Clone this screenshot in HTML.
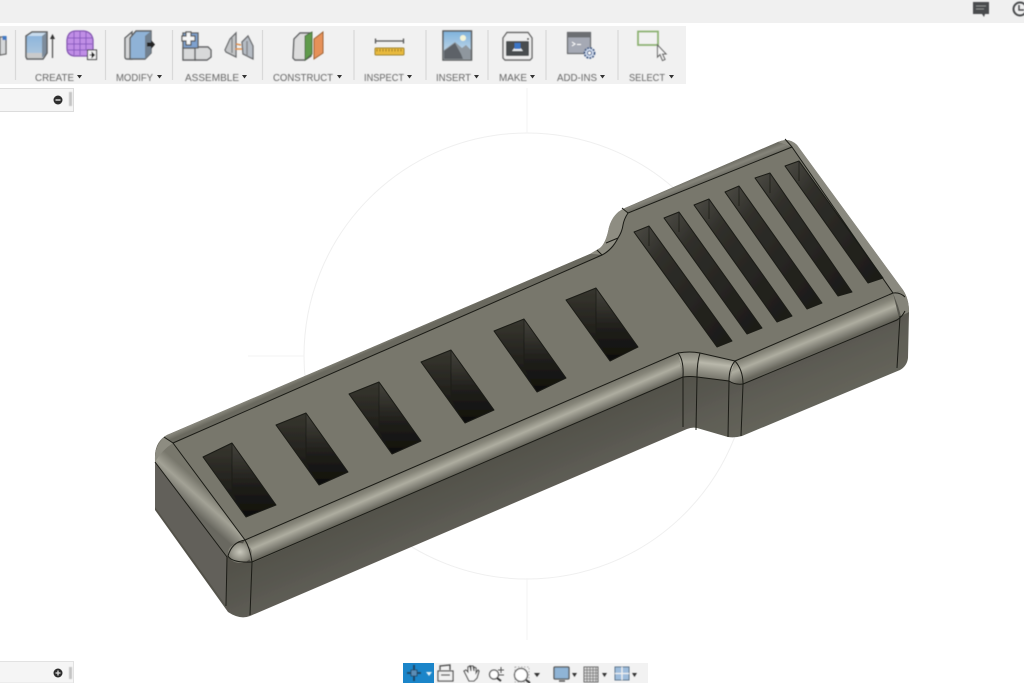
<!DOCTYPE html>
<html><head><meta charset="utf-8"><style>
html,body{margin:0;padding:0;background:#fff;width:1024px;height:683px;overflow:hidden}
svg{display:block}
text{font-family:"Liberation Sans",sans-serif;font-size:10.500px;fill:#666}
</style></head><body>
<svg width="1024" height="683" viewBox="0 0 1024 683" xmlns="http://www.w3.org/2000/svg">
<defs>
<linearGradient id="front" gradientUnits="userSpaceOnUse" x1="400" y1="473" x2="409" y2="494"><stop offset="0" stop-color="#78776c"/><stop offset=".2" stop-color="#87867a"/><stop offset=".5" stop-color="#aeada0"/><stop offset=".8" stop-color="#838278"/><stop offset="1" stop-color="#66655b"/></linearGradient>
<linearGradient id="frontR" gradientUnits="userSpaceOnUse" x1="810" y1="328" x2="819" y2="350"><stop offset="0" stop-color="#78776c"/><stop offset=".2" stop-color="#87867a"/><stop offset=".5" stop-color="#aeada0"/><stop offset=".8" stop-color="#838278"/><stop offset="1" stop-color="#66655b"/></linearGradient>
<linearGradient id="notch" gradientUnits="userSpaceOnUse" x1="712" y1="355" x2="709" y2="380"><stop offset="0" stop-color="#7d7c71"/><stop offset=".35" stop-color="#b9b8ab"/><stop offset=".7" stop-color="#8f8e83"/><stop offset="1" stop-color="#6f6e64"/></linearGradient>
<linearGradient id="notch2" gradientUnits="userSpaceOnUse" x1="688" y1="352" x2="688" y2="377"><stop offset="0" stop-color="#85847a"/><stop offset=".4" stop-color="#a9a89b"/><stop offset="1" stop-color="#6f6e64"/></linearGradient>
<linearGradient id="leftb" gradientUnits="userSpaceOnUse" x1="208" y1="490" x2="191" y2="509"><stop offset="0" stop-color="#78776c"/><stop offset=".45" stop-color="#a3a296"/><stop offset="1" stop-color="#696860"/></linearGradient>
<linearGradient id="back" gradientUnits="userSpaceOnUse" x1="400" y1="338" x2="396" y2="329"><stop offset="0" stop-color="#6a695f"/><stop offset=".5" stop-color="#87867b"/><stop offset="1" stop-color="#737268"/></linearGradient>
<linearGradient id="back2" gradientUnits="userSpaceOnUse" x1="710" y1="182" x2="706" y2="172"><stop offset="0" stop-color="#63625a"/><stop offset=".6" stop-color="#85847a"/><stop offset="1" stop-color="#6e6d64"/></linearGradient>
<linearGradient id="side" gradientUnits="userSpaceOnUse" x1="440" y1="480" x2="470" y2="550"><stop offset="0" stop-color="#52514a"/><stop offset="1" stop-color="#64635a"/></linearGradient>
<linearGradient id="sl" x1="0" y1="0" x2="0" y2="1"><stop offset="0" stop-color="#37362f"/><stop offset=".5" stop-color="#25241f"/><stop offset="1" stop-color="#10100d"/></linearGradient>
<linearGradient id="sr" x1="0" y1="0" x2="0" y2="1"><stop offset="0" stop-color="#44433c"/><stop offset=".55" stop-color="#201f1b"/><stop offset="1" stop-color="#0e0e0b"/></linearGradient>
<linearGradient id="st" x1="0" y1="0" x2="1" y2="1"><stop offset="0" stop-color="#4c4b44"/><stop offset=".25" stop-color="#302f2a"/><stop offset="1" stop-color="#1b1a17"/></linearGradient>
<radialGradient id="ball" cx=".5" cy=".45" r=".6"><stop offset="0" stop-color="#c8c7bb"/><stop offset=".6" stop-color="#96958a"/><stop offset="1" stop-color="#6d6c62"/></radialGradient>
<linearGradient id="blueF" x1="0" y1="0" x2="0" y2="1"><stop offset="0" stop-color="#8db5dc"/><stop offset="1" stop-color="#a9c4dd"/></linearGradient>
<linearGradient id="sky" x1="0" y1="0" x2="0" y2="1"><stop offset="0" stop-color="#7eb2dc"/><stop offset="1" stop-color="#d8e4ec"/></linearGradient>
<filter id="s" x="-20%" y="-20%" width="140%" height="140%"><feGaussianBlur stdDeviation=".4"/></filter>
<filter id="s1" x="-20%" y="-20%" width="140%" height="140%"><feGaussianBlur stdDeviation=".3"/></filter>
<filter id="s2" x="-20%" y="-20%" width="140%" height="140%"><feGaussianBlur stdDeviation=".5"/></filter>
</defs>

<rect width="1024" height="683" fill="#fff"/>
<rect width="1024" height="23" fill="#f0f0f0"/>
<rect y="26" width="686" height="58" fill="#f1f1f1"/>

<!-- top right icons -->
<g filter="url(#s)">
<path d="M973,2H989V14H985L984,17L982,14H973Z" fill="#4a4c4e"/>
<path d="M976,6H986M976,9H984" stroke="#8b8d8e" stroke-width="1"/>
<circle cx="1020" cy="9" r="6.500" fill="none" stroke="#4a4c4e" stroke-width="2"/>
<path d="M1019,5V10H1024" fill="none" stroke="#4a4c4e" stroke-width="1.500"/>
</g>

<!-- separators -->
<g stroke="#d9d9d9" stroke-width="1.300">
<path d="M15.500,30V80M105.500,30V80M172.500,30V80M262.500,30V80M354,30V80M426,30V80M488,30V80M546,30V80M618,30V80"/>
</g>

<!-- toolbar labels -->
<g filter="url(#s)">
<text x="35" y="81" textLength="39" lengthAdjust="spacingAndGlyphs">CREATE</text>
<text x="116" y="81" textLength="37" lengthAdjust="spacingAndGlyphs">MODIFY</text>
<text x="185" y="81" textLength="54" lengthAdjust="spacingAndGlyphs">ASSEMBLE</text>
<text x="273" y="81" textLength="60" lengthAdjust="spacingAndGlyphs">CONSTRUCT</text>
<text x="364" y="81" textLength="40" lengthAdjust="spacingAndGlyphs">INSPECT</text>
<text x="436" y="81" textLength="35" lengthAdjust="spacingAndGlyphs">INSERT</text>
<text x="499" y="81" textLength="28" lengthAdjust="spacingAndGlyphs">MAKE</text>
<text x="557" y="81" textLength="40" lengthAdjust="spacingAndGlyphs">ADD-INS</text>
<text x="629" y="81" textLength="36" lengthAdjust="spacingAndGlyphs">SELECT</text>
</g>
<g fill="#333">
<path d="M77,75H82L79.500,78.500ZM157,75H162L159.500,78.500ZM242,75H247L244.500,78.500ZM337,75H342L339.500,78.500ZM407,75H412L409.500,78.500ZM474,75H479L476.500,78.500ZM530,75H535L532.500,78.500ZM600,75H605L602.500,78.500ZM669,75H674L671.500,78.500Z"/>
</g>

<!-- toolbar icons -->
<g filter="url(#s)">
<path d="M0,37H6V54L0,55Z" fill="#d5d7d9" stroke="#666" stroke-width="1.300"/>
<rect x="2.500" y="36" width="4" height="4" fill="#3f78c2"/>
<!-- create box -->
<path d="M26,36H42V53H26Z" fill="url(#blueF)"/>
<path d="M26,36L32,32H47L42,36Z" fill="#c8dcee"/>
<path d="M42,36L47,32V53L42,58Z" fill="#7d8c9c"/>
<path d="M26,53H42V59H26Z" fill="#c9cacb"/>
<path d="M26,36L32,32H47V53L43,59H27L26,57Z" fill="none" stroke="#5e6062" stroke-width="1.500"/>
<path d="M52.500,58V38" stroke="#555" stroke-width="1.300"/><path d="M50,39L52.500,34L55,39Z" fill="#333"/>
<!-- mesh -->
<path d="M67,40Q68,31 76,31H84Q92,32 93,40V50H88V56H74Q67,55 67,48Z" fill="#c08ee6" stroke="#8254b0" stroke-width="1.300"/>
<path d="M67,38H92M67,44H92M68,50H88M74,32V55M80,31V55M86,32V50" stroke="#8a5abf" stroke-width="1" fill="none"/>
<rect x="87.500" y="50" width="9" height="9.500" fill="#f4f4f4" stroke="#444" stroke-width="1.100"/>
<path d="M89.500,55H93M92,52.500L94.500,55L92,57.500Z" fill="#222" stroke="#222" stroke-width=".9"/>
<!-- modify -->
<path d="M125,38L132,32V59H127Q125,59 125,57Z" fill="#d6d7d8" stroke="#5e6062" stroke-width="1.400"/>
<path d="M130,59V38L136,31H151V53L145,59Z" fill="#8fb2d6" stroke="#5e6062" stroke-width="1.400"/>
<path d="M145,36L151,31V53L145,59Z" fill="#71808f"/>
<path d="M147,42.500H151V40L155,44.500L151,49V46.500H147Z" fill="#222"/>
<!-- assemble 1 -->
<path d="M194,47H208L211,50V57L207,60H195Z" fill="#d8d9da" stroke="#5e6062" stroke-width="1.400"/>
<path d="M183,48H195V60H183Z" fill="#d8d9da" stroke="#5e6062" stroke-width="1.400"/>
<path d="M183,33H198V48H183Z" fill="#7ea1cf" stroke="#5e6062" stroke-width="1.300"/>
<path d="M186,32H191V36H195V41H191V45H186V41H182V36H186Z" fill="#f7f7f7" stroke="#555" stroke-width="1.200"/>
<!-- assemble 2 -->
<path d="M225,50L230,39L236,33V57L226,52Z" fill="#c4c6c8" stroke="#6a6c6e" stroke-width="1.300"/>
<path d="M242,42L248,36L253,46V59L243,54Z" fill="#b6bcc4" stroke="#6a6c6e" stroke-width="1.300"/>
<path d="M236,44L241,45M235,49L242,49" stroke="#df9250" stroke-width="1.500"/>
<path d="M232,38V53M247,41V56" stroke="#86888b" stroke-width="1.500"/>
<!-- construct -->
<path d="M294,39L300,33H311V56L305,60H295L293,58Z" fill="#dcdcdc" stroke="#5e6062" stroke-width="1.400"/>
<path d="M305,36L312,32V54L305,60Z" fill="#5e9a4b" stroke="#4b6b3f" stroke-width=".9"/>
<path d="M314,39L323,32V53L314,59Z" fill="#e69158" stroke="#9a6032" stroke-width="1"/>
<!-- inspect -->
<path d="M375,41H404M375.500,38.500V43.500M403.500,38.500V43.500" stroke="#555" stroke-width="1.300" fill="none"/>
<rect x="375" y="48" width="29" height="7" rx="1" fill="#e8b93c" stroke="#9f8434" stroke-width="1"/>
<path d="M377,49V51.500M380,49V51.500M383,49V51.500M386,49V51.500M389,49V51.500M392,49V51.500M395,49V51.500M398,49V51.500M401,49V51.500" stroke="#8b6c1d" stroke-width=".8"/>
<!-- insert -->
<rect x="443" y="31" width="28.500" height="29" fill="url(#sky)"/>
<circle cx="463" cy="38" r="3" fill="#f4f5d8"/>
<path d="M444,59V50L455,42L462,48L466,45L471,50V59Z" fill="#8f979e"/>
<path d="M444,59V51L455,43L461,54L463,59Z" fill="#5d6267"/>
<rect x="443" y="31" width="28.500" height="29" fill="none" stroke="#5b5d5f" stroke-width="1.500"/>
<!-- make -->
<path d="M503,38L507,32.500H528L532,38V58L530,60H505L503,58Z" fill="#eeeeee" stroke="#666" stroke-width="1.400"/>
<rect x="506" y="41" width="23" height="15" rx="1" fill="#4a4d50"/>
<path d="M512,51L516,46H519L523,51Z" fill="#e8ecef"/>
<rect x="514.500" y="43" width="6" height="6" fill="#3a76c6"/>
<circle cx="528" cy="39" r="1" fill="#333"/>
<!-- addins -->
<rect x="567.500" y="32.500" width="23" height="21" fill="#a5a9b4" stroke="#66686c" stroke-width="1.200"/>
<rect x="567.500" y="32.500" width="23" height="5" fill="#6c6e72"/>
<path d="M572,42L575,44L572,46M577,44.500H581" stroke="#fff" stroke-width="1" fill="none"/>
<circle cx="589.500" cy="53" r="5" fill="#cfdcf0" stroke="#3f5a85" stroke-width="1.800" stroke-dasharray="2 1"/>
<circle cx="589.500" cy="53" r="2" fill="#fff" stroke="#3f5a85" stroke-width="1"/>
<!-- select -->
<rect x="638" y="31.500" width="20" height="13.500" fill="none" stroke="#8ab06f" stroke-width="1.700"/>
<path d="M657.500,45V57L660,54.500L662.500,60.500L665,59.500L662.500,54H666Z" fill="#f5f5f5" stroke="#666" stroke-width="1.100"/>
</g>

<!-- left panels -->
<path d="M0,88.500H73.500V111.500H0" fill="#f5f5f5" stroke="#dcdcdc"/>
<circle cx="58" cy="100" r="4.500" fill="#2d2d2d"/><rect x="55.500" y="99.300" width="5" height="1.400" fill="#ddd"/>
<rect x="69" y="92" width="3" height="14" fill="#c4c4c4" filter="url(#s)"/>
<path d="M0,661.500H73.500V683H0" fill="#f5f5f5" stroke="#e2e2e2"/>
<circle cx="58" cy="673" r="4.500" fill="#2d2d2d"/><path d="M55.500,673H60.500M58,670.500V675.500" stroke="#ddd" stroke-width="1.300"/>
<rect x="69" y="667" width="3" height="12" fill="#c4c4c4" filter="url(#s)"/>

<!-- sketch circle & axes -->
<circle cx="527" cy="356" r="223" fill="none" stroke="#efefef" stroke-width="1"/>
<path d="M248,356H304M527,578V640M527,88V133" stroke="#f3f3f3" stroke-width="1"/>

<!-- MODEL -->
<g filter="url(#s1)">
<!-- base silhouette -->
<path d="M155,455Q156,441 167,435L590,254L600,248Q605,244 608,232Q611,214 625,208L778,142Q789,137 797,145L903,290Q909,299 909,312L908,358Q907,366 900,370L742,436Q735,438 728,437L697,428Q692,427 687,429L250,616Q240,620 228,612L155,510Z" fill="url(#side)"/>
<!-- left side face -->
<path d="M155,462L227,557L227,607L155,507Z" fill="#62615a"/>
<!-- back fillets -->
<path d="M155,455Q156,441 167,435L590,254L602,256L173,443L165,450Z" fill="url(#back)"/>
<path d="M590,254L600,248Q605,244 608,232Q611,214 625,208L628,213Q624,220 623,225Q620,238 618,238Q614,246 602,255Z" fill="#8e8d82"/>
<path d="M625,208L778,142L792,147L628,213Z" fill="url(#back2)"/>
<path d="M778,142Q789,137 797,145L903,290L893,293L792,147Z" fill="#8a897f"/>
<!-- top face -->
<path d="M173,443L602,255Q612,250 618,238Q622,232 623,225Q624,219 628,213L792,147L893,293L735,361L700,353Q690,351 678,353L245,540Z" fill="#78776c"/>
<!-- left fillet -->
<path d="M155,462L160,450L173,443L245,540L232,545L227,557Z" fill="url(#leftb)"/>
<!-- front fillet -->
<path d="M245,540L678,353L683,377L252,563L240,548Z" fill="url(#front)"/>
<!-- notch fillets -->
<path d="M678,353Q690,351 700,353L697,377Q690,376 683,377Z" fill="url(#notch2)"/>
<path d="M700,353L735,361L729,381L697,377Z" fill="url(#notch)"/>
<path d="M735,361L743,384L729,381Z" fill="#8e8d82"/>
<path d="M735,361L893,293L899,318L743,384Q733,385 729,381Z" fill="url(#frontR)"/>
<!-- corners -->
<ellipse cx="240" cy="553" rx="12" ry="10" fill="url(#ball)"/>
<path d="M155,462Q154,446 164,438L173,443Q162,450 155,462Z" fill="#8d8c81"/>
<path d="M893,293L903,290Q909,299 909,312L901,316L898,306Z" fill="#85847a"/>
<!-- slots -->
<path d="M203,457L232,443L276,505L246,517Z" fill="url(#sr)"/><path d="M203,457L232,443L232,492L246,517Z" fill="url(#sl)"/>
<path d="M276,425L306,413L348,472L319,485Z" fill="url(#sr)"/><path d="M276,425L306,413L306,462L319,485Z" fill="url(#sl)"/>
<path d="M349,394L379,382L421,441L392,454Z" fill="url(#sr)"/><path d="M349,394L379,382L379,431L392,454Z" fill="url(#sl)"/>
<path d="M421,362L451,350L494,410L465,423Z" fill="url(#sr)"/><path d="M421,362L451,350L451,399L465,423Z" fill="url(#sl)"/>
<path d="M494,331L524,319L566,378L537,392Z" fill="url(#sr)"/><path d="M494,331L524,319L524,368L537,392Z" fill="url(#sl)"/>
<path d="M566,300L596,288L638,347L610,361Z" fill="url(#sr)"/><path d="M566,300L596,288L596,337L610,361Z" fill="url(#sl)"/>
<!-- thin slots -->
<path d="M634,232L649,226L732,341L717,347Z" fill="url(#st)"/>
<path d="M664,218L679,212L762,328L747,334Z" fill="url(#st)"/>
<path d="M694,205L709,199L792,316L777,322Z" fill="url(#st)"/>
<path d="M725,192L739,186L822,303L807,309Z" fill="url(#st)"/>
<path d="M755,178L770,173L852,292L838,296Z" fill="url(#st)"/>
<path d="M785,166L799,161L883,278L868,283Z" fill="url(#st)"/>
<!-- edges -->
<g fill="none" stroke="#1a1b16" stroke-width="1" stroke-linejoin="round">
<path d="M203,457L232,443L276,505L246,517ZM276,425L306,413L348,472L319,485ZM349,394L379,382L421,441L392,454ZM421,362L451,350L494,410L465,423ZM494,331L524,319L566,378L537,392ZM566,300L596,288L638,347L610,361Z"/>
<path d="M634,232L649,226L732,341L717,347ZM664,218L679,212L762,328L747,334ZM694,205L709,199L792,316L777,322ZM725,192L739,186L822,303L807,309ZM755,178L770,173L852,292L838,296ZM785,166L799,161L883,278L868,283Z"/>
<path d="M232,443V490M306,413V460M379,382V429M451,350V397M524,319V366M596,288V335M649,226V246M679,212V232M709,199V219M739,186V206M770,173V193M799,161V181" stroke-width=".7"/>
<path d="M173,443L602,255Q612,250 618,238Q622,232 623,225Q624,219 628,213L792,147L893,293L735,361L700,353Q690,351 678,353L245,540Z"/>
<path d="M155,462L227,557"/>
<path d="M252,562L683,377Q690,376 697,377L729,381Q735,385 743,384L897,320Q902,317 905,311"/>
<path d="M173,443L164,437M245,540Q232,542 228,556Q232,563 252,562Q250,548 245,540M792,147L785,139M893,293Q900,292 905,297M628,213L622,208M618,238L606,243M602,255L597,250"/>
<path d="M227,557L226,606M252,562L250,615M683,377L683,427M697,377L696,430M729,381L728,437M743,384L741,436M900,316L897,368"/>
<path d="M678,353Q684,360 683,377M700,353Q697,362 697,377M735,361Q729,368 729,381M735,361Q743,370 743,384"/>
</g>
</g>

<!-- bottom toolbar -->
<rect x="403" y="663" width="245" height="20" fill="#f2f2f2"/>
<rect x="403" y="663" width="31" height="20" fill="#1b85c9"/>
<g filter="url(#s2)">
<path d="M414,665V681M407,673H421" stroke="#24435f" stroke-width="1.800"/>
<path d="M411,670H417V676H411Z" fill="#5b8db5" stroke="#24435f" stroke-width=".8"/>
<path d="M426,672H432L429,676Z" fill="#e8f3fa"/>
<rect x="438" y="671" width="15" height="10" fill="#f1f1f1" stroke="#4a4a4a" stroke-width="1.200"/>
<path d="M440,670V666L450,665V670M441,675H450" stroke="#4a4a4a" stroke-width="1.300" fill="none"/>
<path d="M466,675L464,671L466,670L468,672V667L470,666L471,671V666L473,666L474,671V667L476,668V673L478,670L479,671L477,678L474,681H469Z" fill="#f7f7f7" stroke="#444" stroke-width="1.100"/>
<circle cx="494" cy="674.500" r="4.500" fill="#fff" stroke="#555" stroke-width="1.300"/>
<path d="M497,678L501,681" stroke="#333" stroke-width="2"/>
<path d="M501,667V673M498,670H504M498,675H504" stroke="#555" stroke-width="1"/>
<circle cx="521" cy="675" r="6.500" fill="#fff" stroke="#555" stroke-width="1.300"/>
<path d="M515,667H529V682H515Z" fill="none" stroke="#999" stroke-dasharray="1.500 1.500" stroke-width=".8"/>
<path d="M526,680L530,683" stroke="#333" stroke-width="2"/>
<path d="M534,673H540L537,677Z" fill="#333"/>
<rect x="554" y="667" width="15" height="12" rx="1" fill="#8fb4d6" stroke="#555" stroke-width="1.300"/>
<path d="M559,681H565" stroke="#555" stroke-width="1.500"/>
<path d="M572,673H577L574.500,677Z" fill="#333"/>
<rect x="584" y="667" width="14" height="15" fill="#d5d5d5" stroke="#666" stroke-width="1"/>
<path d="M587,667V682M590,667V682M593,667V682M596,667V682M584,670H598M584,673H598M584,676H598M584,679H598" stroke="#777" stroke-width=".8"/>
<path d="M602,673H607L604.500,677Z" fill="#333"/>
<rect x="615" y="667" width="14" height="13" fill="#9dbcdc" stroke="#5c7288" stroke-width="1"/>
<path d="M622,667V680M615,673.500H629" stroke="#f2f2f2" stroke-width="1.300"/>
<path d="M632,673H637L634.500,677Z" fill="#333"/>
</g>
</svg>
</body></html>
